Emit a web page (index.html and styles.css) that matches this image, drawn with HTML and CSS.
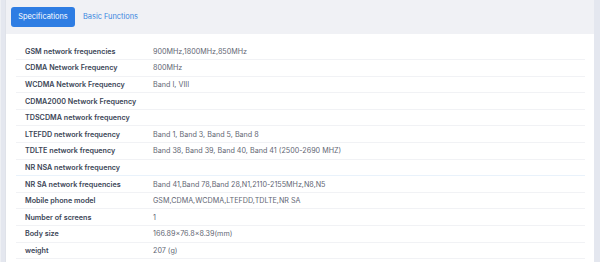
FILE: index.html
```html
<!DOCTYPE html>
<html lang="en">
<head>
<meta charset="utf-8">
<title>Specifications</title>
<link rel="stylesheet" href="styles.css">
</head>
<body>
<div class="panel">
  <div class="tabs">
    <button class="tab active">Specifications</button>
    <button class="tab">Basic Functions</button>
  </div>
  <div class="body">
    <table class="spec">
      <tr><th>GSM network frequencies</th><td>900MHz,1800MHz,850MHz</td></tr>
      <tr><th>CDMA Network Frequency</th><td>800MHz</td></tr>
      <tr><th>WCDMA Network Frequency</th><td>Band I, VIII</td></tr>
      <tr><th>CDMA2000 Network Frequency</th><td></td></tr>
      <tr><th>TDSCDMA network frequency</th><td></td></tr>
      <tr><th>LTEFDD network frequency</th><td>Band 1, Band 3, Band 5, Band 8</td></tr>
      <tr><th>TDLTE network frequency</th><td>Band 38, Band 39, Band 40, Band 41 (2500-2690 MHZ)</td></tr>
      <tr class="hl"><th>NR NSA network frequency</th><td></td></tr>
      <tr><th>NR SA network frequencies</th><td>Band 41,Band 78,Band 28,N1,2110-2155MHz,N8,N5</td></tr>
      <tr><th>Mobile phone model</th><td>GSM,CDMA,WCDMA,LTEFDD,TDLTE,NR SA</td></tr>
      <tr><th>Number of screens</th><td>1</td></tr>
      <tr><th>Body size</th><td>166.89×76.8×8.39(mm)</td></tr>
      <tr><th>weight</th><td>207 (g)</td></tr>
    </table>
  </div>
</div>
</body>
</html>
```
FILE: styles.css
```css
html, body {
  margin: 0;
  padding: 0;
}
body {
  background: #e4e7ef;
  font-family: Inter, Roboto, "Liberation Sans", sans-serif;
  height: 262px;
  overflow: hidden;
  box-sizing: border-box;
  padding: 0 6px 0 4px;
  border-left: 1px solid #eef0f4;
}
.panel {
  background: #fff;
  height: 262px;
  border-left: 1px solid #dfe2e9;
}
.tabs {
  background: #f0f1f5;
  height: 34px;
  display: flex;
  align-items: center;
  gap: 8px;
  padding: 0 0 0 5px;
  box-sizing: border-box;
}
.tab {
  font-family: inherit;
  font-size: 7.4px;
  border: none;
  background: transparent;
  color: #3a86e0;
  padding: 0;
  height: 20px;
  line-height: 20px;
  border-radius: 3px;
  cursor: pointer;
}
.tab.active {
  background: #2e7de3;
  color: #fff;
  width: 64px;
}
.body {
  padding: 9px 9px 0 10px;
}
.spec {
  width: 100%;
  border-collapse: collapse;
  font-size: 7.2px;
}
.spec tr {
  height: 16.6px;
  border-bottom: 1px solid #f1f2f5;
}
.spec tr.hl {
  border-bottom-color: #e9f2fb;
}
.spec th {
  text-align: left;
  font-weight: 600;
  color: #3c4657;
  width: 128px;
  padding: 0 0 0 9px;
}
.spec td {
  color: #626673;
  padding: 0;
}
```
